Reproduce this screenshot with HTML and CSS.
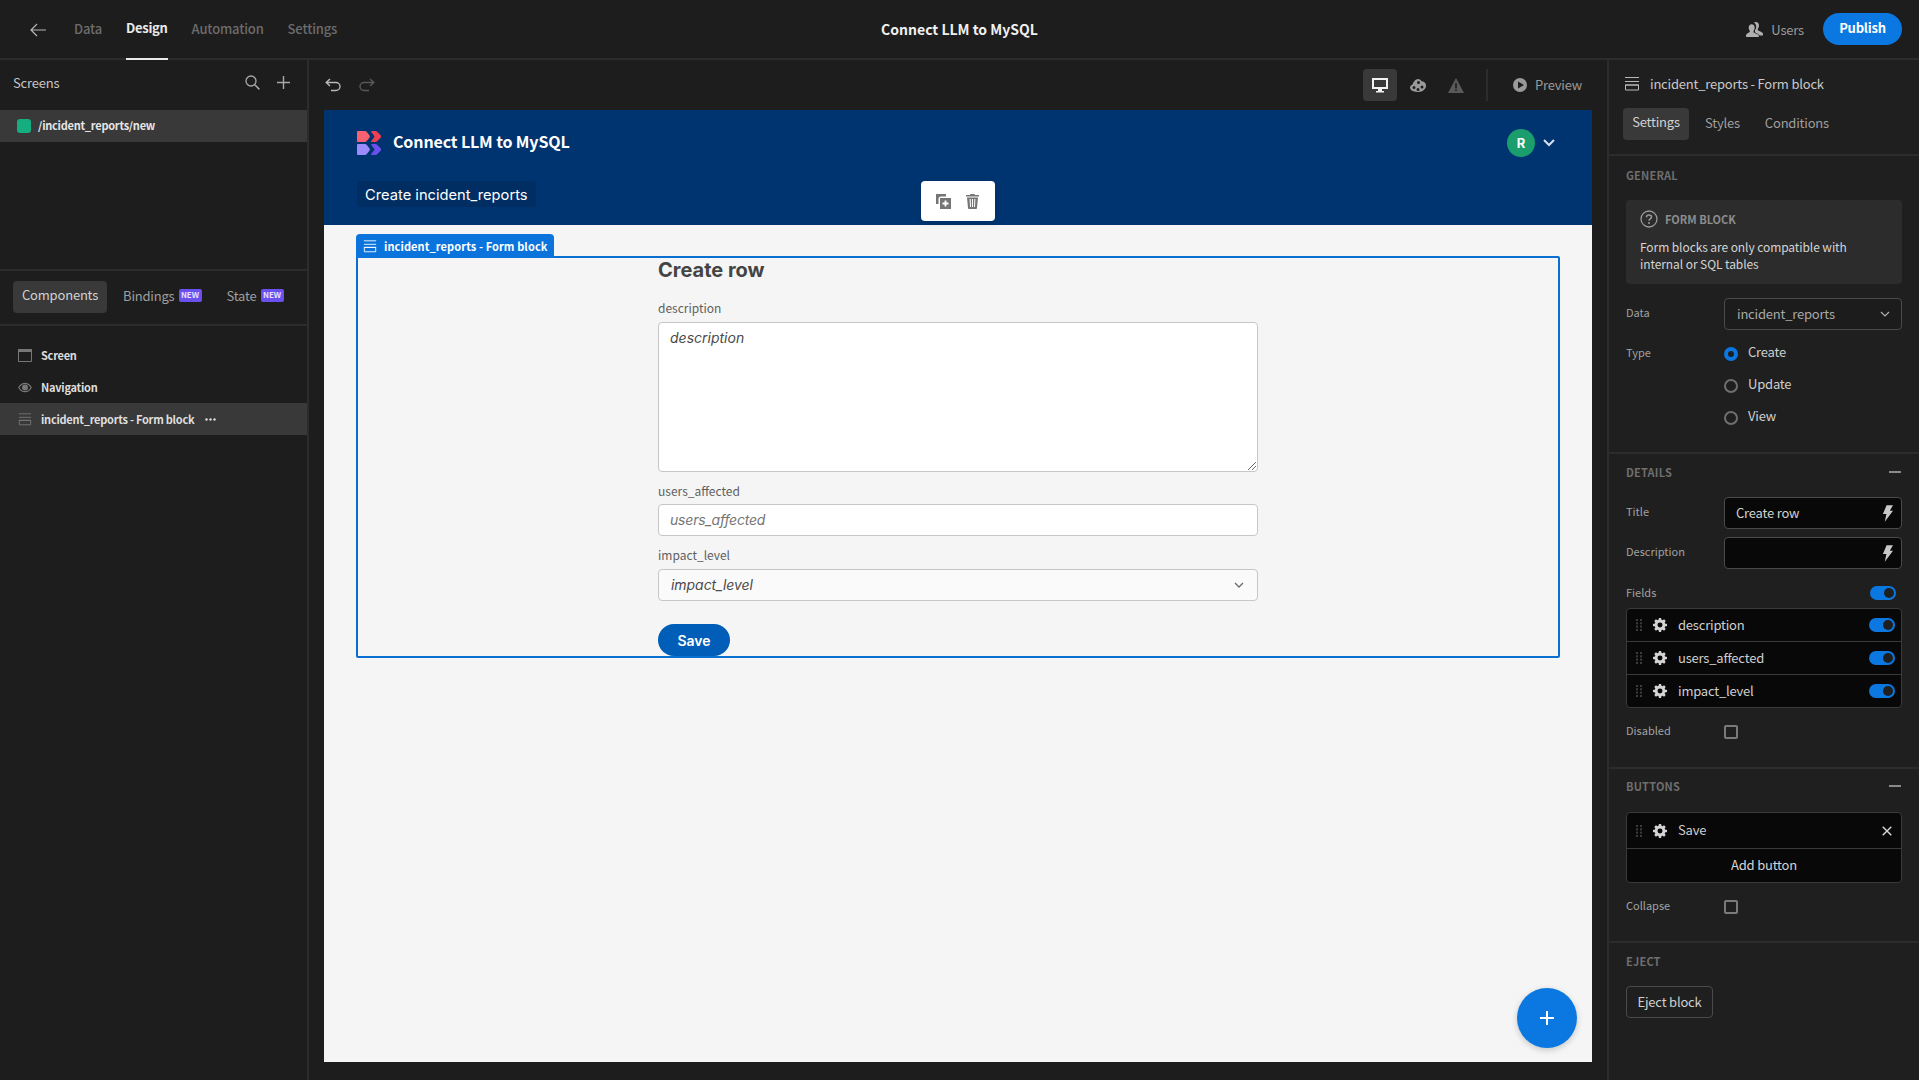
FILE: index.html
```html
<!DOCTYPE html>
<html lang="en">
<head>
<meta charset="utf-8">
<title>Connect LLM to MySQL</title>
<link rel="stylesheet" href="styles.css">
</head>
<body>
<svg class="defs" aria-hidden="true">
  <symbol id="gear" viewBox="0 0 18 18"><path fill-rule="evenodd" d="M7.600 0h2.800l.5 2.400 1.300.6 2.100-1.300 2 2-1.300 2.100.5 1.300 2.500.5v2.800l-2.500.5-.5 1.300 1.300 2.100-2 2-2.100-1.300-1.300.5-.5 2.500H7.600l-.5-2.500-1.300-.5-2.100 1.300-2-2L3 12.200l-.5-1.300L0 10.400V7.600l2.500-.5.5-1.300-1.300-2.100 2-2L5.800 3l1.300-.6zM9 5.800a3.200 3.200 0 1 0 0 6.400 3.200 3.200 0 0 0 0-6.400z"/></symbol>
  <symbol id="bolt" viewBox="0 0 12 18"><path d="M5 0h7L8.500 6H12L3 18l1.800-8.500H1z"/></symbol>
  <symbol id="grip" viewBox="0 0 6 12"><g><rect width="2" height="2"/><rect x="4" width="2" height="2"/><rect y="3.300" width="2" height="2"/><rect x="4" y="3.300" width="2" height="2"/><rect y="6.600" width="2" height="2"/><rect x="4" y="6.600" width="2" height="2"/><rect y="10" width="2" height="2"/><rect x="4" y="10" width="2" height="2"/></g></symbol>
  <symbol id="form" viewBox="0 0 16 14"><path fill="none" stroke="currentColor" d="M1 .5h14M1 4.500h14M1.500 8h13v5h-13zM1 8h14"/></symbol>
  <symbol id="logo-l" viewBox="0 0 13 11"><path d="M0 1a1 1 0 0 1 1-1h7a2 2 0 0 1 1.600.8l2.800 3.500a2 2 0 0 1 0 2.400L9.600 10.200A2 2 0 0 1 8 11H1a1 1 0 0 1-1-1z"/></symbol>
  <symbol id="logo-r" viewBox="0 0 10 11"><path d="M1 0h3.500a2 2 0 0 1 1.600.8l3.500 3.500a2 2 0 0 1 0 2.400L6.100 10.200a2 2 0 0 1-1.600.8H1c-1 0-1.100-.7-.6-1.300L2.800 6.800a2 2 0 0 0 0-2.600L.4 1.300C-.1.700 0 0 1 0z"/></symbol>
</svg>

<div class="app">
  <header class="topbar">
    <div class="top-left">
      <svg class="back" viewBox="0 0 16 14"><path d="M7 1 1 7l6 6M1 7h15" fill="none" stroke="currentColor" stroke-width="1.200"/></svg>
      <nav class="top-tabs">
        <span class="top-tab">Data</span>
        <span class="top-tab active">Design</span>
        <span class="top-tab">Automation</span>
        <span class="top-tab">Settings</span>
      </nav>
    </div>
    <div class="app-title">Connect LLM to MySQL</div>
    <div class="top-right">
      <svg class="users-icon" viewBox="0 0 18 16"><path d="M10.500 0c2 0 3.300 1.600 3.300 3.700 0 1.400-.5 2.700-1.300 3.500v1.300c0 .7 4.500 2 5.500 3.500v2.500h-3.600c-.6-2-4.400-3-4.900-3.700V8.700c.8-.8 1.300-2.200 1.300-3.600C10.800 3 10 1.500 8.200.9 8.800.3 9.600 0 10.500 0zM6 2.500c2 0 3.200 1.500 3.200 3.400 0 1.400-.4 2.700-1.200 3.500v1.400c0 .7 4.800 1.900 5.500 3.200V16H0v-2.500c.7-1.300 4-2.500 4-3.200V9.400C3.200 8.600 2.800 7.300 2.800 5.900 2.800 4 4 2.500 6 2.500z"/></svg>
      <span class="users-text">Users</span>
      <span class="publish">Publish</span>
    </div>
  </header>

  <div class="workspace">
    <aside class="left">
      <section class="screens">
        <div class="screens-head">
          <span>Screens</span>
          <div class="screens-actions">
            <svg class="ico-search" viewBox="0 0 15 15"><circle cx="6" cy="6" r="5" fill="none" stroke="currentColor" stroke-width="1.300"/><path d="m9.800 9.800 4.600 4.600" stroke="currentColor" stroke-width="1.500"/></svg>
            <svg class="ico-plus" viewBox="0 0 12 12"><path d="M6 0v12M0 6h12" stroke="currentColor" stroke-width="1.300"/></svg>
          </div>
        </div>
        <div class="screen-row"><i class="dot"></i><span>/incident_reports/new</span></div>
      </section>
      <section class="left-tabs">
        <span class="pill">Components</span>
        <span class="left-tab tab-b">Bindings<b class="new">NEW</b></span>
        <span class="left-tab tab-s">State<b class="new">NEW</b></span>
      </section>
      <section class="tree">
        <div class="tree-row">
          <svg class="tree-ico" viewBox="0 0 14 13"><path fill="none" stroke="currentColor" d="M.5.500h13v12H.500zM.5 2.500h13"/><path d="M0 0h14v3H0z" fill="currentColor"/></svg>
          <span>Screen</span>
        </div>
        <div class="tree-row">
          <svg class="tree-ico" viewBox="0 0 14 10"><path fill="none" stroke="currentColor" stroke-width="1.200" d="M.8 5C2.500 2 4.500.8 7 .8S11.500 2 13.200 5C11.500 8 9.500 9.200 7 9.200S2.500 8 .8 5z"/><circle cx="7" cy="5" r="3" fill="currentColor"/></svg>
          <span>Navigation</span>
        </div>
        <div class="tree-row selected">
          <svg class="tree-ico"><use href="#form"/></svg>
          <span>incident_reports - Form block</span>
          <svg class="more" viewBox="0 0 11 3"><circle cx="1.500" cy="1.500" r="1.200"/><circle cx="5.500" cy="1.500" r="1.200"/><circle cx="9.500" cy="1.500" r="1.200"/></svg>
        </div>
      </section>
    </aside>

    <main class="center">
      <div class="toolbar">
        <div class="history">
          <svg class="hist" viewBox="0 0 16 14"><path d="M5 1 1.200 4.500 5 8M1.500 4.500H11a4 4 0 0 1 0 8H6" fill="none" stroke="currentColor" stroke-width="1.400"/></svg>
          <svg class="hist off" viewBox="0 0 16 14"><path d="m11 1 3.800 3.500L11 8m3.500-3.500H5a4 4 0 0 0 0 8h5" fill="none" stroke="currentColor" stroke-width="1.400"/></svg>
        </div>
        <div class="tools">
          <span class="tool on"><svg viewBox="0 0 16 15" class="ico16"><path fill-rule="evenodd" d="M0 0h16v11H10v2h2v1.500H4V13h2v-2H0zm2 2v7h12V2z"/></svg></span>
          <span class="tool"><svg viewBox="0 0 16 13" class="ico16 dim"><path fill-rule="evenodd" d="M8 0c1.700 0 3 1 3.500 2.200C14 2.300 16 4 16 6.500 16 10 13 13 8.500 13 4 13 0 11.500 0 8.500 0 6.800 1.500 6 2.500 5.500 3.500 3 5.500 0 8 0zM4 7a1.500 1.500 0 1 0 0 3 1.500 1.500 0 0 0 0-3zm4 2a1.500 1.500 0 1 0 0 3 1.500 1.500 0 0 0 0-3zm4-2.500a1.500 1.500 0 1 0 0 3 1.500 1.500 0 0 0 0-3zM8.500 2a1.500 1.500 0 1 0 0 3 1.500 1.500 0 0 0 0-3z"/></svg></span>
          <span class="tool"><svg viewBox="0 0 16 15" class="ico16 warn"><path fill-rule="evenodd" d="M8 0l8 15H0zM7.200 5v5.500h1.600V5zm0 6.500V13h1.600v-1.500z"/></svg></span>
          <i class="tool-sep"></i>
          <span class="preview-btn">
            <svg viewBox="0 0 14 14" class="play"><path fill-rule="evenodd" d="M7 0a7 7 0 1 1 0 14A7 7 0 0 1 7 0zM5 3.500v7L11 7z"/></svg>
            Preview
          </span>
        </div>
      </div>

      <div class="preview">
        <div class="app-nav">
          <div class="nav-main">
            <div class="brand">
              <svg class="logo" viewBox="0 0 24 24">
                <use href="#logo-l" x="0" y="0" width="13" height="11" fill="#f8616f"/>
                <use href="#logo-r" x="14" y="0" width="10" height="11" fill="#ef3f52"/>
                <use href="#logo-l" x="0" y="13" width="13" height="11" fill="#9c8cfb"/>
                <use href="#logo-r" x="14" y="13" width="10" height="11" fill="#6b50ee"/>
              </svg>
              <span class="brand-name">Connect LLM to MySQL</span>
            </div>
            <div class="user">
              <span class="avatar">R</span>
              <svg class="user-chev" viewBox="0 0 12 8"><path d="m1 1 5 5 5-5" fill="none" stroke="currentColor" stroke-width="2"/></svg>
            </div>
          </div>
          <div class="nav-links"><span class="nav-link">Create incident_reports</span></div>
          <div class="float-actions">
            <svg viewBox="0 0 15 15" class="act"><path d="M0 0h10v2.500H5A2.500 2.500 0 0 0 2.500 5v5H0z"/><path fill-rule="evenodd" d="M4 4h11v11H4zm4.600 2.500v2.100H6.500v1.800h2.100v2.100h1.800v-2.100h2.100V8.600h-2.100V6.500z"/></svg>
            <svg viewBox="0 0 13 15" class="act act-trash"><path fill-rule="evenodd" d="M4.500 0h4l.5 1h4v1.500H0V1h4zM1 3.500h11L11 14a1 1 0 0 1-1 1H3a1 1 0 0 1-1-1zM3.600 5 4 13h1l-.3-8zm2.400 0v8h1V5zm2.400 0L8 13h1l.4-8z"/></svg>
          </div>
        </div>

        <div class="app-body">
          <div class="frame">
            <div class="frame-tag">
              <svg class="tag-ico"><use href="#form"/></svg>
              <span>incident_reports - Form block</span>
            </div>
            <div class="form">
              <h1 class="form-title">Create row</h1>
              <label class="f-label f-first">description</label>
              <div class="f-control f-area">
                <span class="f-val">description</span>
                <svg class="grabber" viewBox="0 0 8 8"><path d="M8 0 0 8M8 4 4 8" stroke="#6b6b6b" fill="none"/></svg>
              </div>
              <label class="f-label">users_affected</label>
              <div class="f-control"><span class="f-ph">users_affected</span></div>
              <label class="f-label f-third">impact_level</label>
              <div class="f-control f-select">
                <span class="f-val">impact_level</span>
                <svg class="sel-chev" viewBox="0 0 10 6"><path d="m1 1 4 4 4-4" fill="none" stroke="currentColor" stroke-width="1.300"/></svg>
              </div>
              <span class="save">Save</span>
            </div>
          </div>
        </div>
      </div>

      <div class="fab"><svg viewBox="0 0 16 16" class="fab-plus"><path d="M8 1v14M1 8h14" stroke="#fff" stroke-width="2"/></svg></div>
    </main>

    <aside class="right">
      <section class="r-head">
        <div class="r-title">
          <svg class="r-title-ico"><use href="#form"/></svg>
          <span>incident_reports - Form block</span>
        </div>
        <div class="r-tabs">
          <span class="pill r-pill">Settings</span>
          <span class="r-tab">Styles</span>
          <span class="r-tab">Conditions</span>
        </div>
      </section>

      <section class="r-sec sec-general">
        <div class="sec-label">GENERAL</div>
        <div class="info">
          <div class="info-head">
            <svg viewBox="0 0 18 18" class="info-ico"><circle cx="9" cy="9" r="8" fill="none" stroke="currentColor" stroke-width="1.300"/><path d="M6.500 7.200C6.500 5.700 7.600 5 9 5s2.500.8 2.500 2.100c0 1.800-2.500 1.800-2.500 3.700" fill="none" stroke="currentColor" stroke-width="1.500"/><circle cx="9" cy="13" r="1" fill="currentColor"/></svg>
            <span>FORM BLOCK</span>
          </div>
          <p class="info-text">Form blocks are only compatible with internal or SQL tables</p>
        </div>
        <div class="prop prop-first">
          <span class="prop-name">Data</span>
          <div class="picker">
            <span>incident_reports</span>
            <svg viewBox="0 0 10 6" class="picker-chev"><path d="m1 1 4 4 4-4" fill="none" stroke="currentColor" stroke-width="1.200"/></svg>
          </div>
        </div>
        <div class="prop-type">
          <span class="prop-name">Type</span>
          <div class="radios">
            <div class="radio-row"><i class="radio checked"></i><span>Create</span></div>
            <div class="radio-row"><i class="radio"></i><span>Update</span></div>
            <div class="radio-row"><i class="radio"></i><span>View</span></div>
          </div>
        </div>
      </section>

      <section class="r-sec sec-details">
        <div class="sec-label sec-row"><span>DETAILS</span><i class="minus"></i></div>
        <div class="prop prop-title">
          <span class="prop-name">Title</span>
          <div class="bind"><span>Create row</span><svg class="bolt"><use href="#bolt"/></svg></div>
        </div>
        <div class="prop prop-next">
          <span class="prop-name">Description</span>
          <div class="bind"><span></span><svg class="bolt"><use href="#bolt"/></svg></div>
        </div>
        <div class="fields-head">
          <span class="prop-name">Fields</span>
          <i class="toggle"></i>
        </div>
        <div class="list">
          <div class="list-row"><svg class="grip"><use href="#grip"/></svg><svg class="gear"><use href="#gear"/></svg><span class="grow">description</span><i class="toggle"></i></div>
          <div class="list-row"><svg class="grip"><use href="#grip"/></svg><svg class="gear"><use href="#gear"/></svg><span class="grow">users_affected</span><i class="toggle"></i></div>
          <div class="list-row"><svg class="grip"><use href="#grip"/></svg><svg class="gear"><use href="#gear"/></svg><span class="grow">impact_level</span><i class="toggle"></i></div>
        </div>
        <div class="prop check-row">
          <span class="prop-name">Disabled</span>
          <i class="check"></i>
        </div>
      </section>

      <section class="r-sec sec-buttons">
        <div class="sec-label sec-row"><span>BUTTONS</span><i class="minus"></i></div>
        <div class="list list-buttons">
          <div class="list-row row-save"><svg class="grip"><use href="#grip"/></svg><svg class="gear"><use href="#gear"/></svg><span class="grow">Save</span><svg viewBox="0 0 10 10" class="close"><path d="m.7.700 8.600 8.600M9.300.700.700 9.300" stroke="currentColor" stroke-width="1.400"/></svg></div>
          <div class="add-btn">Add button</div>
        </div>
        <div class="prop check-row check-row-b">
          <span class="prop-name">Collapse</span>
          <i class="check"></i>
        </div>
      </section>

      <section class="r-sec sec-eject">
        <div class="sec-label">EJECT</div>
        <span class="eject">Eject block</span>
      </section>
    </aside>
  </div>
</div>
</body>
</html>
```

FILE: styles.css
```css
* { box-sizing: border-box; }
html, body { margin: 0; height: 100%; }
body {
  width: 1919px; height: 1080px; overflow: hidden;
  background: #1d1d1d; color: #d6d6d6;
  font-family: "Noto Sans CJK SC", "Noto Sans", sans-serif;
  font-size: 13px; letter-spacing: -.2px;
}
.defs { position: absolute; width: 0; height: 0; }
.app { display: flex; flex-direction: column; height: 1080px; }

/* top bar */
.topbar {
  height: 60px; flex: none; position: relative;
  display: flex; align-items: stretch; justify-content: space-between;
  border-bottom: 2px solid #2c2c2c; background: #1d1d1d;
}
.top-left { display: flex; align-items: center; padding-left: 30px; }
.back { width: 16px; height: 14px; color: #b5b5b5; margin-top: 2px; }
.top-tabs { display: flex; align-self: stretch; gap: 24px; margin-left: 28px; height: 60px; }
.top-tab { display: flex; align-items: center; padding-bottom: 4px; color: #6c6c6c; font-weight: 500; letter-spacing: -.15px; }
.top-tab.active { color: #eaeaea; font-weight: 700; letter-spacing: -.3px; border-bottom: 2px solid #e8e8e8; }
.app-title {
  position: absolute; left: 0; right: 0; top: 0; height: 58px;
  display: flex; align-items: center; justify-content: center;
  color: #f0f0f0; font-size: 14px; font-weight: 700; letter-spacing: 0; pointer-events: none;
}
.top-right { display: flex; align-items: center; padding-right: 17px; }
.users-icon { width: 17px; height: 15px; fill: #b0b0b0; margin-right: 1px; }
.users-text { margin-left: 7px; color: #9a9a9a; }
.publish {
  margin-left: 19px; width: 79px; height: 32px; border-radius: 16px;
  display: flex; align-items: center; justify-content: center;
  background: #0a78e0; color: #fff; font-weight: 700; padding-bottom: 4px;
}

.workspace { flex: 1; display: flex; min-height: 0; }

/* left */
.left { width: 309px; flex: none; border-right: 2px solid #2c2c2c; display: flex; flex-direction: column; }
.screens { height: 211px; flex: none; border-bottom: 2px solid #2c2c2c; }
.screens-head { height: 50px; display: flex; align-items: center; justify-content: space-between; padding: 0 17px 5px 13px; color: #c6c6c6; }
.screens-actions { display: flex; align-items: center; gap: 17px; color: #a8a8a8; }
.ico-search { width: 15px; height: 15px; }
.ico-plus { width: 13px; height: 13px; }
.screen-row { height: 32px; background: #393939; display: flex; align-items: center; padding-left: 17px; gap: 7px; font-size: 11px; letter-spacing: -.25px; font-weight: 700; color: #e6e6e6; }
.screen-row span { padding-bottom: 2px; }
.dot { width: 14px; height: 14px; border-radius: 3px; background: #16ae80; }
.left-tabs { height: 55px; flex: none; border-bottom: 2px solid #2c2c2c; display: flex; align-items: flex-start; padding: 10px 0 0 13px; position: relative; }
.pill { height: 32px; padding: 0 9px 5px; display: flex; align-items: center; background: #393939; border-radius: 4px; color: #d2d2d2; }
.left-tab { height: 32px; display: flex; align-items: center; color: #9f9f9f; padding-bottom: 4px; }
.tab-b { margin-left: 16px; }
.tab-s { margin-left: 25px; }
.new { margin-left: 4px; width: 23px; height: 13px; border-radius: 2px; background: #6a50ec; color: #e4e0ff; font-size: 8px; font-weight: 700; letter-spacing: 0; display: flex; align-items: center; justify-content: center; padding-bottom: 1px; }
.tree { padding-top: 13px; }
.tree-row { height: 32px; display: flex; align-items: center; padding-left: 18px; font-size: 11px; letter-spacing: -.25px; font-weight: 700; color: #dedede; }
.tree-row span { margin-left: 9px; padding-bottom: 1px; }
.tree-row.selected { background: #393939; }
.tree-ico { width: 14px; height: 13px; color: #777; flex: none; }
.more { width: 11px; height: 3px; margin-left: 11px; fill: #e0e0e0; }

/* center */
.center { flex: 1; min-width: 0; padding: 0 15px 0 15px; position: relative; }
.toolbar { height: 50px; display: flex; align-items: center; justify-content: space-between; padding-left: 1px; }
.history { display: flex; align-items: center; gap: 18px; }
.hist { width: 16px; height: 14px; color: #b9b9b9; }
.hist.off { color: #595959; }
.tools { display: flex; align-items: center; padding-right: 10px; }
.tool { width: 34px; height: 32px; border-radius: 4px; display: flex; align-items: center; justify-content: center; margin-right: 4px; }
.tool.on { background: #393939; }
.ico16 { width: 16px; height: 15px; fill: #f2f2f2; }
.ico16.dim { fill: #9a9a9a; height: 13px; }
.ico16.warn { fill: #5a5a5a; }
.tool-sep { width: 2px; height: 32px; background: #2c2c2c; margin: 0 25px 0 9px; }
.preview-btn { display: flex; align-items: center; gap: 8px; color: #9a9a9a; padding-bottom: 2px; }
.play { width: 14px; height: 14px; fill: #9a9a9a; margin-top: 2px; }

.preview { height: 952px; background: #f5f5f5; font-family: Inter, sans-serif; letter-spacing: 0; position: relative; }
.app-nav { height: 115px; background: #003470; padding: 0 32px 0 33px; position: relative; }
.nav-main { height: 66px; display: flex; align-items: center; justify-content: space-between; }
.brand { display: flex; align-items: center; gap: 12px; }
.logo { width: 24px; height: 24px; }
.brand-name { font-family: "Noto Sans CJK SC", sans-serif; font-size: 16px; font-weight: 700; letter-spacing: -.13px; color: #fff; padding-bottom: 5px; }
.user { display: flex; align-items: center; gap: 8px; }
.avatar { width: 28px; height: 28px; border-radius: 50%; background: #1b9e6d; color: #fff; font-size: 13px; font-weight: 700; display: flex; align-items: center; justify-content: center; }
.user-chev { width: 12px; height: 8px; color: #d5dff0; margin-right: 5px; }
.nav-links { display: flex; margin-top: 5px; }
.nav-link { height: 26px; padding: 1px 8px 0; display: flex; align-items: center; background: #002e63; border-radius: 4px; color: #fff; font-size: 14.700px; }
.float-actions {
  position: absolute; left: 597px; top: 71px; width: 74px; height: 40px;
  background: #fff; border-radius: 4px; box-shadow: 0 2px 6px rgba(0,0,0,.12);
  display: flex; align-items: center; justify-content: center; gap: 15px; padding-right: 2px;
}
.act { width: 15px; height: 15px; fill: #757575; }
.act-trash { width: 13px; }
.app-body { padding: 31px 32px 0 32px; }
.frame { height: 402px; border: 2px solid #0a6fd0; border-radius: 2px; position: relative; }
.frame-tag {
  position: absolute; left: -2px; top: -24px; height: 24px; width: 198px;
  background: #0a74dc; color: #fff; border-radius: 4px 4px 0 0;
  display: flex; align-items: center; padding-left: 7px; gap: 7px; white-space: nowrap;
  font-family: "Noto Sans CJK SC", sans-serif; font-size: 11px; letter-spacing: .1px; font-weight: 700;
}
.tag-ico { width: 14px; height: 13px; color: #fff; flex: none; }
.form { width: 600px; margin: 0 auto; display: flex; flex-direction: column; align-items: stretch; }
.form-title { margin: 0; height: 24px; line-height: 24px; font-size: 20px; font-weight: 700; color: #444; }
.f-label { height: 18px; line-height: 18px; margin-top: 10px; margin-bottom: 4px; font-size: 12px; color: #5f5f5f; font-family: "Noto Sans CJK SC", Inter, sans-serif; }
.f-first { margin-top: 17px; margin-bottom: 5px; }
.f-third { margin-bottom: 5px; }
.f-control {
  height: 32px; background: #fff; border: 1px solid #c6c6c6; border-radius: 4px;
  display: flex; align-items: center; padding: 0 11px 1px; font-size: 14px; font-style: italic; position: relative;
}
.f-area { height: 150px; align-items: flex-start; padding-top: 6px; }
.f-val { color: #4a4a4a; }
.f-ph { color: #757575; letter-spacing: -.2px; }
.f-select { background: #fafafa; justify-content: space-between; padding: 0 13px 1px 12px; }
.f-select .f-val { letter-spacing: -.05px; }
.sel-chev { width: 10px; height: 6px; color: #6a6a6a; }
.grabber { position: absolute; right: 1px; bottom: 1px; width: 8px; height: 8px; }
.save {
  margin-top: 23px; width: 72px; height: 32px; border-radius: 16px; background: #005eb8; color: #fff;
  display: flex; align-items: center; justify-content: center; font-size: 14px; font-weight: 600;
}
.fab {
  position: absolute; left: 1208px; top: 928px; width: 60px; height: 60px; border-radius: 50%;
  background: #0a78e0; box-shadow: 0 2px 6px rgba(0,0,0,.2);
  display: flex; align-items: center; justify-content: center;
}
.fab-plus { width: 16px; height: 16px; }

/* right */
.right { width: 312px; flex: none; border-left: 2px solid #2c2c2c; background: #1f1f1f; }
.r-head { height: 96px; border-bottom: 2px solid #2c2c2c; padding-left: 14px; }
.r-title { height: 48px; display: flex; align-items: center; gap: 10px; color: #c9c9c9; padding-left: 1px; }
.r-title span { padding-bottom: 2px; }
.r-title-ico { width: 16px; height: 14px; color: #b9b9b9; }
.r-tabs { display: flex; height: 32px; align-items: center; }
.r-pill { padding: 0 8px 5px; width: 66px; justify-content: center; }
.r-tab { color: #9f9f9f; padding-bottom: 4px; margin-left: 16px; }
.r-tab + .r-tab { margin-left: 25px; }
.r-sec { border-bottom: 2px solid #2c2c2c; padding: 0 17px 0 17px; }
.sec-general { height: 298px; padding-top: 11px; }
.sec-details { height: 315px; padding-top: 10px; }
.sec-buttons { height: 174px; padding-top: 9px; }
.sec-eject { border-bottom: 0; padding-top: 10px; }
.sec-label { height: 16px; line-height: 16px; font-size: 11px; font-weight: 700; letter-spacing: .2px; color: #6e6e6e; }
.sec-row { display: flex; align-items: center; justify-content: space-between; }
.minus { width: 12px; height: 2px; background: #8a8a8a; margin-right: 1px; }
.info { margin-top: 17px; height: 84px; background: #2c2c2c; border-radius: 4px; padding: 10px 14px; }
.info-head { display: flex; align-items: center; gap: 7px; font-size: 11px; font-weight: 700; letter-spacing: 0; color: #8c8c8c; height: 18px; }
.info-ico { width: 18px; height: 18px; color: #9a9a9a; }
.info-text { margin: 10px 0 0; font-size: 12px; letter-spacing: -.08px; line-height: 17px; color: #d4d4d4; }
.prop { display: flex; align-items: center; }
.prop-first { margin-top: 14px; }
.prop-title { margin-top: 17px; }
.prop-next { margin-top: 8px; }
.prop-name { width: 98px; flex: none; font-size: 11px; letter-spacing: 0; color: #a2a2a2; padding-bottom: 4px; }
.picker {
  flex: 1; height: 32px; border: 1px solid #4a4a4a; border-radius: 4px; background: #1c1c1c;
  display: flex; align-items: center; justify-content: space-between; padding: 0 11px 0 12px; color: #a8a8a8;
}
.picker span { padding-bottom: 2px; }
.picker-chev { width: 10px; height: 6px; color: #b0b0b0; }
.prop-type { display: flex; margin-top: 11px; }
.prop-type .prop-name { padding-top: 3px; }
.radios { display: flex; flex-direction: column; gap: 6px; }
.radio-row { height: 26px; display: flex; align-items: center; gap: 10px; color: #cfcfcf; }
.radio-row span { padding-bottom: 5px; }
.radio { width: 14px; height: 14px; border-radius: 50%; border: 2px solid #6f6f6f; }
.radio.checked { border: 4px solid #0a78e0; background: #1f1f1f; }
.bind {
  flex: 1; height: 32px; border: 1px solid #4a4a4a; border-radius: 4px; background: #080808;
  display: flex; align-items: center; justify-content: space-between; padding: 0 8px 0 11px; color: #d0d0d0;
}
.bind span { padding-bottom: 2px; }
.bolt { width: 11px; height: 17px; fill: #c9c9c9; }
.fields-head { margin-top: 16px; height: 16px; display: flex; align-items: center; justify-content: space-between; padding-right: 6px; }
.fields-head .prop-name { padding-bottom: 2px; }
.toggle { width: 26px; height: 14px; border-radius: 7px; background: #0a78e0; position: relative; flex: none; }
.toggle::after { content: ""; position: absolute; right: 2px; top: 2px; width: 10px; height: 10px; border-radius: 50%; background: #1f1f1f; }
.list { margin-top: 7px; width: 276px; border: 1px solid #3a3a3a; border-radius: 4px; background: #080808; }
.list-row { height: 33px; display: flex; align-items: center; padding: 0 6px 0 9px; border-bottom: 1px solid #3a3a3a; color: #cfcfcf; }
.list-row:last-child { border-bottom: 0; height: 32px; }
.grip { width: 6px; height: 12px; fill: #3c3c3c; flex: none; }
.gear { width: 14px; height: 14px; fill: #d4d4d4; margin-left: 11px; flex: none; }
.grow { flex: 1; margin-left: 11px; padding-bottom: 2px; }
.check-row { margin-top: 10px; height: 28px; }
.check-row .prop-name { padding-bottom: 4px; }
.check-row-b { margin-top: 10px; }
.check { width: 14px; height: 14px; border: 2px solid #7a7a7a; border-radius: 2px; }
.list-buttons { margin-top: 18px; }
.list-buttons .row-save { height: 36px; border-bottom: 1px solid #3a3a3a; }
.close { width: 10px; height: 10px; color: #d8d8d8; margin-right: 3px; }
.add-btn { height: 33px; display: flex; align-items: center; justify-content: center; font-weight: 400; color: #d4d4d4; padding-bottom: 2px; }
.eject { display: inline-flex; align-items: center; justify-content: center; margin-top: 17px; width: 87px; height: 32px; border: 1px solid #4a4a4a; border-radius: 4px; color: #cfcfcf; padding-bottom: 2px; }
```
